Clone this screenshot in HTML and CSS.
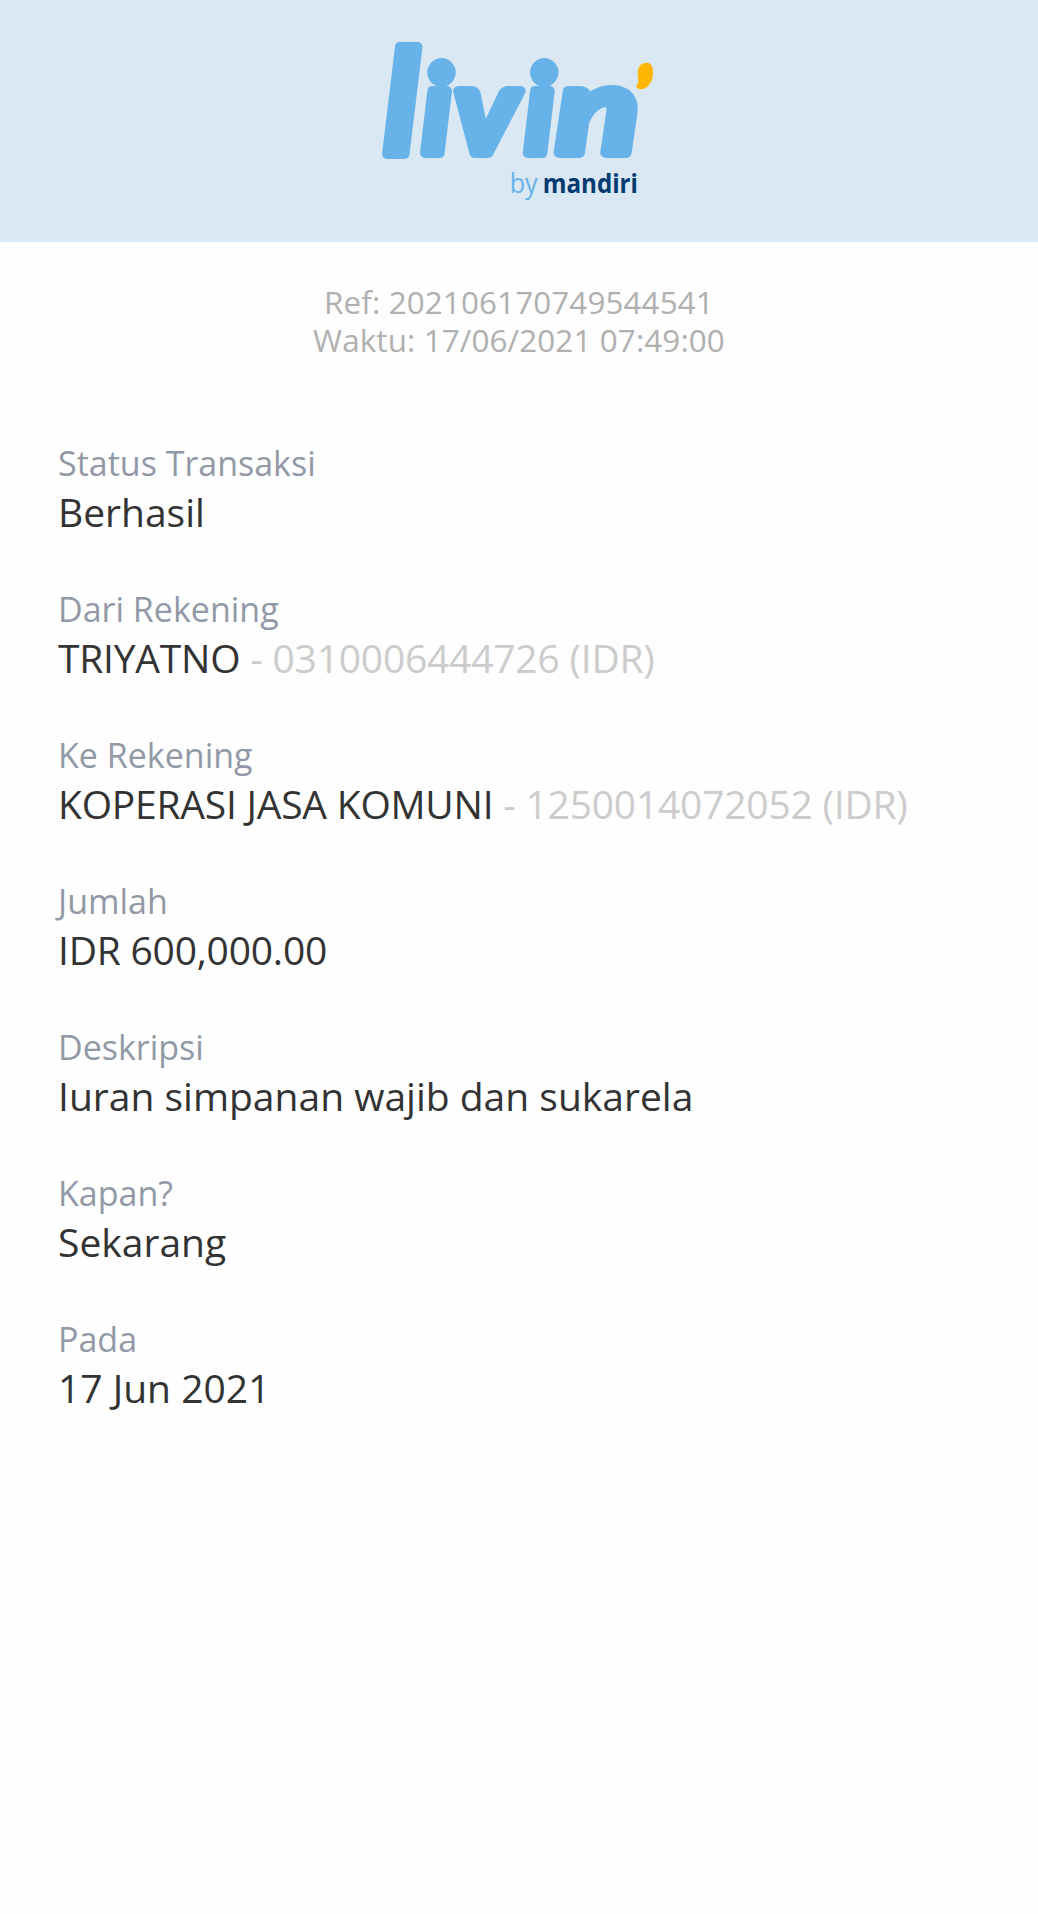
FILE: index.html
```html
<!DOCTYPE html>
<html lang="id">
<head>
    <meta charset="UTF-8">
    <meta name="viewport" content="width=device-width, initial-scale=1.0">
    <title>Livin' by mandiri</title>
    <link rel="stylesheet" href="styles.css">
</head>
<body>
    <header class="header">
        <svg class="logo" viewBox="0 0 900 540" role="img" aria-label="livin' by mandiri">
            <g class="logo-script">
                <text class="logo-l" x="42" y="372">l</text>
                <text x="156" y="368">i</text>
                <text x="254" y="368" textLength="188" lengthAdjust="spacingAndGlyphs">v</text>
                <text x="464" y="368">i</text>
                <text x="560" y="368" textLength="246" lengthAdjust="spacingAndGlyphs">n</text>
            </g>
            <path class="logo-mark" d="M829 98 C844 98 850 110 849 132 C848 157 831 178 812 178 C801 178 795 168 804 159 C808 155 802 143 803 128 C804 108 814 98 829 98 Z"/>
            <text class="logo-by" x="419" y="490" textLength="84" lengthAdjust="spacingAndGlyphs">by</text>
            <text class="logo-brand" x="518" y="490" textLength="286" lengthAdjust="spacingAndGlyphs">mandiri</text>
        </svg>
    </header>

    <main>
        <div class="reference">
            <p>Ref: 202106170749544541</p>
            <p>Waktu: 17/06/2021 07:49:00</p>
        </div>

        <dl class="details">
            <div class="row">
                <dt>Status Transaksi</dt>
                <dd>Berhasil</dd>
            </div>
            <div class="row">
                <dt>Dari Rekening</dt>
                <dd class="numeric">TRIYATNO <span class="account">- 0310006444726 (IDR)</span></dd>
            </div>
            <div class="row">
                <dt>Ke Rekening</dt>
                <dd class="numeric">KOPERASI JASA KOMUNI <span class="account">- 1250014072052 (IDR)</span></dd>
            </div>
            <div class="row">
                <dt>Jumlah</dt>
                <dd class="numeric">IDR 600,000.00</dd>
            </div>
            <div class="row">
                <dt>Deskripsi</dt>
                <dd>Iuran simpanan wajib dan sukarela</dd>
            </div>
            <div class="row">
                <dt>Kapan?</dt>
                <dd>Sekarang</dd>
            </div>
            <div class="row">
                <dt>Pada</dt>
                <dd>17 Jun 2021</dd>
            </div>
        </dl>
    </main>
</body>
</html>
```
FILE: styles.css
```css
* {
    margin: 0;
    padding: 0;
    box-sizing: border-box;
}

body {
    font-family: 'Open Sans', sans-serif;
    background: #fefefe;
    min-height: 100vh;
}

.header {
    height: 242px;
    padding-top: 30px;
    padding-left: 2px;
    background: #dae8f3;
    text-align: center;
}

.logo {
    width: 300px;
    height: 180px;
    overflow: visible;
}

.logo-script {
    font-family: Lato, sans-serif;
    font-size: 360px;
    font-weight: 700;
    font-style: italic;
    fill: #67b2e8;
    stroke: #67b2e8;
    stroke-width: 30;
    stroke-linejoin: round;
}

.logo-l {
    font-size: 430px;
}

.logo-mark {
    fill: #ffb600;
}

.logo-by {
    font-size: 80px;
    fill: #67b2e8;
}

.logo-brand {
    font-size: 80px;
    font-weight: 700;
    fill: #003a70;
}

.reference {
    padding-top: 41px;
    text-align: center;
    font-size: 31.4px;
    line-height: 38px;
    letter-spacing: 0.12px;
    font-kerning: none;
    color: #b0b0b0;
}

.details {
    margin-top: 81px;
    padding: 0 58px;
}

.row {
    margin-bottom: 48px;
}

dt {
    font-size: 34px;
    line-height: 46px;
    font-kerning: none;
    color: #9299a6;
}

dd {
    font-size: 39px;
    line-height: 52px;
    color: #333;
}

.numeric {
    letter-spacing: -0.22px;
}

.account {
    color: #ccc;
}
```
